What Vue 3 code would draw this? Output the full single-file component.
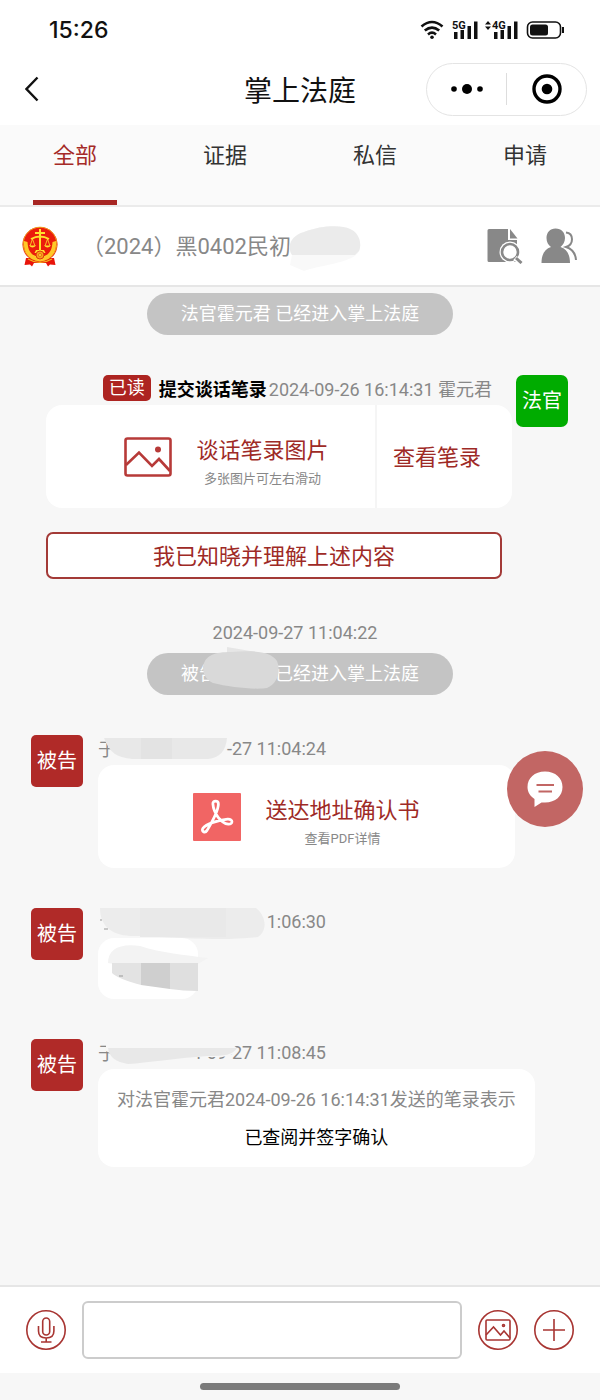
<script setup>
import { ref } from 'vue'

const tabs = ['全部', '证据', '私信', '申请']
const activeTab = ref('全部')
const message = ref('')
</script>

<template>
  <div class="page">
    <div class="status">
      <span class="clock">15:26</span>
      <svg class="signals" width="146" height="24" viewBox="0 0 146 24">
        <g fill="none" stroke="#111" stroke-width="2.6">
          <path d="M1.5 8.5 Q12 -0.5 22.500 8.500" />
          <path d="M4.800 12.600 Q12 6.500 19.200 12.600" />
          <path d="M8 16.400 Q12 13 16 16.400" />
        </g>
        <circle cx="12" cy="19.300" r="1.800" fill="#111" />
        <g fill="#111">
          <path d="M34 14h3.500v7H34zM40.500 12H44v9h-3.500zM47.500 8H51v13h-3.500zM54 3.500h3.500V21H54z" />
          <path d="M74 14h3.500v7H74zM80.500 12H84v9h-3.500zM87.500 8H91v13h-3.500zM94 3.500h3.500V21H94z" />
          <path d="M65 6.500l3-3.500 3 3.500zM65 8.500l3 3.500 3-3.500z" />
        </g>
        <text x="32" y="11" class="net">5G</text>
        <text x="72" y="11" class="net">4G</text>
        <rect x="107.500" y="4" width="33" height="16" rx="5" fill="none" stroke="#111" stroke-width="1.600" />
        <rect x="110" y="6.500" width="18" height="11" rx="2.500" fill="#111" />
        <path d="M143 9v6" stroke="#111" stroke-width="2" />
      </svg>
    </div>

    <header class="nav">
      <button class="back" aria-label="返回">
        <svg width="14" height="26" viewBox="0 0 14 26">
          <path d="M12.500 1.500 L1.500 13 L12.500 24.500" fill="none" stroke="#111" stroke-width="2.400" />
        </svg>
      </button>
      <h1>掌上法庭</h1>
      <div class="capsule">
        <button aria-label="更多">
          <svg width="32" height="12" viewBox="0 0 32 12">
            <circle cx="3" cy="6" r="2.800" />
            <circle cx="16" cy="6" r="5" />
            <circle cx="29" cy="6" r="2.800" />
          </svg>
        </button>
        <i class="split"></i>
        <button aria-label="关闭">
          <svg width="30" height="30" viewBox="0 0 30 30">
            <circle cx="15" cy="15" r="13" fill="none" stroke="#000" stroke-width="3.400" />
            <circle cx="15" cy="15" r="5.300" />
          </svg>
        </button>
      </div>
    </header>

    <nav class="tabs">
      <button v-for="tab in tabs" :key="tab" :class="{ active: tab === activeTab }" @click="activeTab = tab">
        {{ tab }}
      </button>
    </nav>

    <section class="case">
      <svg class="emblem" width="36" height="41" viewBox="0 0 36 41">
        <path d="M4 32 L2.500 39 L8 38.500 L10 40.500 L12 37 H24 L26 40.500 L28 38.500 L33.500 39 L32 32z" fill="#e8140a" />
        <circle cx="18" cy="18.500" r="17.500" fill="#eb1c0c" />
        <circle cx="18" cy="18" r="16.800" fill="none" stroke="#f0a21c" stroke-width="1" />
        <path d="M2 15 C1 27 7 34 18 35.500 C29 34 35 27 34 15 L30.500 16 C30 26 26 30 18 31 C10 30 6 26 5.500 16z" fill="#ffc928" />
        <path d="M18 3v22M13 7h10M9 13 Q18 8 27 13" fill="none" stroke="#ffe22e" stroke-width="2" />
        <path d="M10.500 13 L8 20 M10.500 13 L13 20 M25.500 13 L23 20 M25.500 13 L28 20" stroke="#ffe22e" stroke-width=".8" />
        <path d="M7 19.500h7q-3.500 4-7 0zM22 19.500h7q-3.500 4-7 0z" fill="#ffe22e" />
        <path d="M14 24h8l1.500 3h-11z" fill="#ffe22e" />
        <circle cx="18" cy="29" r="4" fill="#f6a31a" stroke="#e13810" />
        <circle cx="18" cy="29" r="1.500" fill="#ffe22e" stroke="#e13810" stroke-width=".6" />
        <path d="M6 33 Q18 40 30 33" fill="none" stroke="#f4b51d" stroke-width="1.200" />
      </svg>
      <div class="number">
        （2024）黑0402民初0
        <svg class="smudge" width="80" height="46" viewBox="0 0 80 46">
          <path d="M8 30 C3 22 6 11 20 7 C38 0 58 0 66 4 C76 8 78 20 75 26 C70 38 36 40 20 46 L6 40z" fill="#f9f9f9" />
          <path d="M8 30 C3 22 6 11 20 7 C38 0 58 0 66 4 C76 8 78 20 75 26 L71 30z" fill="#ebebeb" />
        </svg>
      </div>
      <button aria-label="查阅卷宗">
        <svg width="36" height="36" viewBox="0 0 36 36">
          <path d="M2 1h19v11h9v22H2q-1.500 0-1.500-1.500v-30Q.5 1 2 1z" fill="#888" />
          <path d="M23 1l7.500 9.500H23z" fill="#888" />
          <circle cx="23" cy="24" r="10.500" fill="#fff" />
          <circle cx="23" cy="24" r="8" fill="none" stroke="#888" stroke-width="2.600" />
          <path d="M28 30l6 5" stroke="#fff" stroke-width="5" />
          <path d="M29 30l5.500 5" stroke="#888" stroke-width="3" />
        </svg>
      </button>
      <button aria-label="参与人">
        <svg width="36" height="36" viewBox="0 0 36 36">
          <path d="M14.500 0.500c6 0 9.500 4 9.500 9.500 0 4-2 7-4.500 9 6 2 9.500 7 9.500 16H.5c0-9 3.500-14 9.500-16-2.800-2-4.500-5-4.500-9 0-5.500 3.500-9.500 9-9.500z" fill="#888" />
          <path d="M25 4.500c8 1 8 12 0 14.500 6 2 9.500 6 10 13" fill="none" stroke="#888" stroke-width="2" />
        </svg>
      </button>
    </section>

    <main class="chat">
      <p class="pill">法官霍元君 已经进入掌上法庭</p>

      <article class="row right">
        <div class="body">
          <div class="meta">
            <span class="badge">已读</span>
            <b>提交谈话笔录</b>
            <span>2024-09-26 16:14:31 霍元君</span>
          </div>
          <div class="card record">
            <button class="file">
              <svg width="48" height="40" viewBox="0 0 48 40" fill="none" stroke="#b73a38" stroke-width="2.600">
                <rect x="1.500" y="1.500" width="45" height="37" rx="2" />
                <path d="M2 28 L15 15.500 L28 29 L35 22 L46 34" />
                <circle cx="34" cy="12.500" r="3" fill="#b73a38" stroke="none" />
              </svg>
              <span class="label">
                <span class="title">谈话笔录图片</span>
                <span class="sub">多张图片可左右滑动</span>
              </span>
            </button>
            <button class="view">查看笔录</button>
          </div>
          <button class="confirm">我已知晓并理解上述内容</button>
        </div>
        <span class="avatar judge">法官</span>
      </article>

      <div class="notice">
        <time>2024-09-27 11:04:22</time>
        <p class="pill spread">
          <span>被告</span><span>已经进入掌上法庭</span>
          <svg class="smudge name" width="84" height="48" viewBox="0 0 84 48">
            <path d="M26 0 L66 7 L26 7z" fill="#e6e6e6" />
            <path d="M2 20 C4 8 14 5 30 5 C50 3 70 4 76 14 C80 24 77 36 66 41 C54 43 28 40 12 36 C4 32 2 26 2 20z" fill="#d9d9d9" />
          </svg>
        </p>
      </div>

      <article class="row">
        <span class="avatar">被告</span>
        <div class="body">
          <div class="meta split-meta">
            <span>于</span><span>-27 11:04:24</span>
            <svg class="smudge line" width="170" height="30" viewBox="0 0 170 30">
              <path d="M6 3 H129 C128 15 122 23 110 24 H34 C18 22 12 18 6 3z" fill="#e8e8e8" />
              <path d="M43 3h31v21H43z" fill="#e3e3e3" />
            </svg>
          </div>
          <button class="card file">
            <svg width="48" height="48" viewBox="0 0 140 140">
              <rect width="140" height="140" rx="3" fill="#f16564" />
              <path d="M58 32 C57 21 74 21 74 32 C74 52 56 84 41 109 C35 118 23 112 29 103 C38 90 75 79 101 76 C118 75 117 92 103 91 C82 88 60 60 58 32z" fill="none" stroke="#fff" stroke-width="8" />
            </svg>
            <span class="label">
              <span class="title">送达地址确认书</span>
              <span class="sub">查看PDF详情</span>
            </span>
          </button>
        </div>
      </article>

      <article class="row">
        <span class="avatar">被告</span>
        <div class="body">
          <div class="meta split-meta">
            <span></span><span>1:06:30</span>
            <svg class="smudge line" width="170" height="34" viewBox="0 0 170 34">
              <path d="M2 0 H158 C168 8 170 22 160 29 C120 34 60 28 36 28 C16 28 2 20 2 0z" fill="#ececec" />
              <path d="M42 0h86v29H42z" fill="#e9e9e9" />
              <path d="M2 12h2M6 21h4" stroke="#999" />
            </svg>
          </div>
          <div class="card hidden-text">
            <svg width="104" height="53" viewBox="0 0 104 53">
              <path d="M2 20 C2 6 14 0 34 3 C56 10 78 12 102 15 L92 21 H8z" fill="#f3f3f3" />
              <path d="M6 20H35V42C20 38 10 34 6 30z" fill="#e3e3e3" />
              <path d="M35 20h29v26L35 42z" fill="#cfcfcf" />
              <path d="M64 20h28v28q-15 0-28-2z" fill="#dfdfdf" />
              <path d="M13 33h4" stroke="#999" />
            </svg>
          </div>
        </div>
      </article>

      <article class="row">
        <span class="avatar">被告</span>
        <div class="body">
          <div class="meta split-meta">
            <span>于</span><span>4-09-27 11:08:45</span>
            <svg class="smudge line" width="170" height="30" viewBox="0 0 170 30">
              <path d="M8 0 H126 L139 9 C136 16 130 18 120 18 H76 V24 H30 L8 12z" fill="#f7f7f7" />
              <path d="M10 9 H139 C135 16 126 17 110 17 C76 19 50 24 30 25 C18 23 11 18 10 9z" fill="#e8e8e8" />
            </svg>
          </div>
          <div class="card reply">
            <p>对法官霍元君2024-09-26 16:14:31发送的笔录表示</p>
            <p class="signed">已查阅并签字确认</p>
          </div>
        </div>
      </article>
    </main>

    <button class="float" aria-label="消息">
      <svg width="36" height="36" viewBox="0 0 36 36">
        <path d="M18 0.500C28.500.5 35.500 7 35.500 16S28.500 31.500 18 31.500h-3.500L7.500 36v-8C3 25 .5 21 .5 16 .5 7 7.500.5 18 .5z" fill="#fff" />
        <path d="M9.500 14h17.500M11.500 20.500h13.500" stroke="#c26664" stroke-width="2.200" />
      </svg>
    </button>

    <form class="compose" @submit.prevent="message = ''">
      <button type="button" aria-label="语音">
        <svg width="40" height="40" viewBox="0 0 40 40">
          <circle cx="20" cy="20" r="19.200" />
          <rect x="16.700" y="8" width="7" height="17" rx="3.500" />
          <path d="M12.500 16v5q0 7 7.700 7t7.700-7v-5M20.200 28v4M15 32h10.500" />
        </svg>
      </button>
      <input v-model="message" type="text" aria-label="输入消息">
      <button type="button" aria-label="图片">
        <svg width="40" height="40" viewBox="0 0 40 40">
          <circle cx="20" cy="20" r="19.200" />
          <rect x="8" y="10" width="24" height="20" rx="1" />
          <path d="M8 25l7.500-8 7 8 3.500-4 6 7" />
          <circle cx="25.500" cy="15.500" r="1" />
        </svg>
      </button>
      <button type="button" aria-label="更多功能">
        <svg width="40" height="40" viewBox="0 0 40 40">
          <circle cx="20" cy="20" r="19.200" />
          <path d="M9 20h22M20 9v22" />
        </svg>
      </button>
    </form>
    <div class="home"><i></i></div>
  </div>
</template>

<style>
body {
  margin: 0;
  background: #f7f7f7;
}
</style>

<style scoped>
.page {
  display: flex;
  flex-direction: column;
  min-height: 100vh;
  background: #fff;
  color: #888;
  font-family: Roboto, 'Noto Sans CJK SC', sans-serif;
  font-size: 18px;
}

p, h1 {
  margin: 0;
  font-weight: 400;
}

button {
  padding: 0;
  border: none;
  background: none;
  color: inherit;
  font: inherit;
  cursor: pointer;
}

svg {
  display: block;
  flex-shrink: 0;
}

.status {
  display: flex;
  align-items: center;
  justify-content: space-between;
  height: 53px;
  padding: 6px 34px 0 49px;
  box-sizing: border-box;
}

.clock {
  color: #111;
  font: 500 23px Inter, sans-serif;
}

.net {
  font: 700 11px Roboto, sans-serif;
  fill: #111;
  stroke: #fff;
  stroke-width: 2px;
  paint-order: stroke;
}

.nav {
  display: grid;
  grid-template-columns: 1fr auto 1fr;
  align-items: center;
  height: 72px;
  padding: 0 13px;
}

.back {
  justify-self: start;
  padding: 0 12px;
}

h1 {
  color: #111;
  font-size: 28px;
}

.capsule {
  justify-self: end;
  display: flex;
  align-items: center;
  width: 161px;
  height: 53px;
  border: 1px solid #e4e4e4;
  border-radius: 27px;
  box-sizing: border-box;
}

.capsule button {
  flex: 1;
  display: flex;
  justify-content: center;
}

.split {
  width: 1px;
  height: 32px;
  background: #ddd;
}

.tabs {
  display: flex;
  background: #fafafa;
  border-bottom: 2px solid #ebebeb;
}

.tabs button {
  position: relative;
  flex: 1;
  height: 80px;
  padding-bottom: 24px;
  color: #333;
  font-size: 22px;
}

.tabs .active {
  color: #a52a27;
}

.tabs .active::after {
  content: '';
  position: absolute;
  left: 22%;
  right: 22%;
  bottom: 0;
  height: 5px;
  background: #a82724;
}

.case {
  display: flex;
  align-items: center;
  gap: 18px;
  height: 78px;
  padding: 0 23px 0 22px;
  border-bottom: 2px solid #e6e6e6;
}

.number {
  position: relative;
  flex: 1;
  padding: 0 0 4px 6px;
  font-size: 22px;
}

.smudge {
  position: absolute;
}

.number .smudge {
  left: 208px;
  top: -3px;
}

.chat {
  flex: 1;
  display: flex;
  flex-direction: column;
  gap: 40px;
  padding: 6px 0 40px;
  background: #f7f7f7;
}

.pill {
  position: relative;
  align-self: center;
  padding: 0 34px;
  border-radius: 21px;
  background: #c4c4c4;
  color: #fff;
  line-height: 42px;
}

.notice {
  display: flex;
  flex-direction: column;
  align-items: center;
  gap: 6px;
}

.notice time {
  line-height: 28px;
  padding-right: 10px;
}

.spread {
  display: flex;
  gap: 58px;
}

.smudge.name {
  left: 54px;
  top: -6px;
}

.row {
  display: flex;
  align-items: flex-start;
  gap: 15px;
  padding: 0 32px 0 31px;
}

.row.right {
  gap: 4px;
  padding-left: 46px;
}

.body {
  display: flex;
  flex-direction: column;
  align-items: flex-start;
  flex: 1;
}

.avatar {
  width: 52px;
  height: 52px;
  border-radius: 5px;
  background: #b02a28;
  color: #fff;
  font-size: 20px;
  line-height: 52px;
  text-align: center;
}

.judge {
  border-radius: 7px;
  background: #00ac00;
}

.meta {
  position: relative;
  display: flex;
  align-items: center;
  height: 26px;
  margin-bottom: 4px;
  white-space: nowrap;
}

.right .meta {
  align-self: flex-end;
  padding-right: 20px;
}

.meta b {
  margin: 0 2px 0 8px;
  color: #000;
}

.badge {
  padding: 0 6px;
  border-radius: 5px;
  background: #ad2421;
  color: #fff;
  line-height: 26px;
}

.split-meta {
  justify-content: space-between;
  width: 228px;
}

.line {
  left: 0;
  top: 0;
}

.card {
  border-radius: 16px;
  background: #fff;
}

.record {
  display: flex;
  align-self: stretch;
}

.file {
  display: flex;
  align-items: center;
  justify-content: center;
  gap: 24px;
  height: 103px;
}

.card.file {
  align-self: stretch;
  margin-right: 53px;
}

.record .file {
  flex: 1;
  padding-left: 32px;
  border-right: 2px solid #f5f5f5;
}

.label {
  display: flex;
  flex-direction: column;
  align-items: center;
  padding-top: 12px;
}

.title {
  color: #9e2a26;
  font-size: 22px;
  line-height: 32px;
}

.sub {
  font-size: 13px;
  line-height: 24px;
}

.view {
  width: 135px;
  padding: 0 15px 4px 0;
  color: #9e2a26;
  font-size: 22px;
}

.confirm {
  align-self: stretch;
  height: 47px;
  margin: 24px 10px 0 0;
  padding-bottom: 4px;
  border: 2px solid #a33a37;
  border-radius: 7px;
  background: #fff;
  color: #9e2a26;
  font-size: 22px;
}

.hidden-text {
  width: 100px;
  height: 56px;
  padding-top: 5px;
}

.hidden-text svg {
  margin-left: 8px;
}

.reply {
  padding: 12px 19px 10px;
  line-height: 38px;
  text-align: center;
}

.signed {
  color: #000;
}

.float {
  position: fixed;
  right: 17px;
  bottom: 573px;
  display: flex;
  align-items: center;
  justify-content: center;
  width: 76px;
  height: 76px;
  border-radius: 50%;
  background: #c26664;
}

.compose {
  display: flex;
  align-items: center;
  gap: 16px;
  height: 86px;
  padding: 0 26px;
  border-top: 2px solid #e6e6e6;
}

.compose svg {
  fill: none;
  stroke: #a83532;
  stroke-width: 1.6;
}

.compose input {
  flex: 1;
  min-width: 0;
  height: 58px;
  padding: 0 12px;
  border: 2px solid #ccc;
  border-radius: 6px;
  background: #fff;
  box-sizing: border-box;
  font: inherit;
}

.home {
  display: flex;
  align-items: center;
  justify-content: center;
  height: 27px;
  background: #f7f7f7;
}

.home i {
  width: 200px;
  height: 7px;
  border-radius: 4px;
  background: #7b7b7b;
}
</style>
